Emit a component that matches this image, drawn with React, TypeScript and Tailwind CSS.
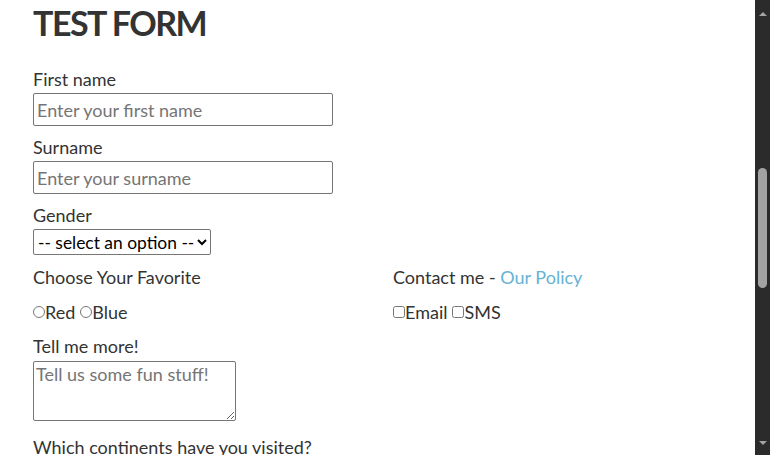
import type { ReactNode } from 'react';

const font = { fontFamily: 'Lato, "Open Sans", sans-serif' };

function Label({ children, className = '' }: { children: ReactNode; className?: string }) {
	return <label className={`block h-[22px] leading-[22px] text-[18px] ${className}`}>{children}</label>;
}

function Scrollbar() {
	return (
		<div className="flex h-[455px] w-[15px] shrink-0 flex-col items-center bg-[#2b2b2b]">
			<div className="mt-[12px] h-0 w-0 border-x-[4px] border-b-[4px] border-x-transparent border-b-[#a3a3a3]" />
			<div className="mt-[152px] h-[120px] w-[9px] rounded-full bg-[#a3a3a3]" />
			<div className="mt-auto mb-[10px] h-0 w-0 border-x-[4px] border-t-[4px] border-x-transparent border-t-[#a3a3a3]" />
		</div>
	);
}

export default function App() {
	return (
		<div className="flex h-[455px] w-[770px] overflow-hidden bg-white text-[#333333]" style={font}>
			<main className="flex-1 overflow-hidden pl-[33px]">
				<h1 className="mt-[1px] h-[44px] text-[34px] leading-[44px] font-bold tracking-[-1.5px] text-[#333333]">
					TEST FORM
				</h1>
				<form className="flex flex-col">
					<Label className="mt-[23px]">First name</Label>
					<input
						className="mt-[3px] h-[33px] w-[300px] rounded-[2px] border border-[#767676] px-[3px] text-[18px] placeholder:text-[#757575] outline-none"
						placeholder="Enter your first name"
						type="text"
					/>
					<Label className="mt-[10px]">Surname</Label>
					<input
						className="mt-[3px] h-[33px] w-[300px] rounded-[2px] border border-[#767676] px-[3px] text-[18px] placeholder:text-[#757575] outline-none"
						placeholder="Enter your surname"
						type="text"
					/>
					<Label className="mt-[10px]">Gender</Label>
					<div className="mt-[3px] flex">
						<select
							className="h-[26px] w-[178px] rounded-[2px] border border-[#767676] bg-white text-[17.4px] text-black"
							defaultValue=""
						>
							<option value="" disabled>
								-- select an option --
							</option>
							<option value="male">Male</option>
							<option value="female">Female</option>
						</select>
					</div>
					<div className="mt-[11px] grid w-[720px] grid-cols-2">
						<div className="flex flex-col">
							<Label>Choose Your Favorite</Label>
							<div className="mt-[13px] flex h-[22px] items-center text-[18px]">
								<input className="m-0 h-[12px] w-[12px]" name="fav" type="radio" />
								<span>Red</span>
								<input className="ml-[5px] h-[12px] w-[12px]" name="fav" type="radio" />
								<span>Blue</span>
							</div>
						</div>
						<div className="flex flex-col">
							<Label>
								Contact me - <a className="text-[#66b3d4]" href="#policy">Our Policy</a>
							</Label>
							<div className="mt-[13px] flex h-[22px] items-center text-[18px]">
								<input className="m-0 h-[12px] w-[12px]" type="checkbox" />
								<span>Email</span>
								<input className="ml-[5px] h-[12px] w-[12px]" type="checkbox" />
								<span>SMS</span>
							</div>
						</div>
					</div>
					<Label className="mt-[12px]">Tell me more!</Label>
					<textarea
						className="mt-[4px] h-[60px] w-[203px] rounded-[2px] border border-[#767676] px-[2px] py-[1px] text-[18px] leading-[22px] placeholder:text-[#757575] outline-none"
						placeholder="Tell us some fun stuff!"
					/>
					<Label className="mt-[15px]">Which continents have you visited?</Label>
				</form>
			</main>
			<Scrollbar />
		</div>
	);
}
